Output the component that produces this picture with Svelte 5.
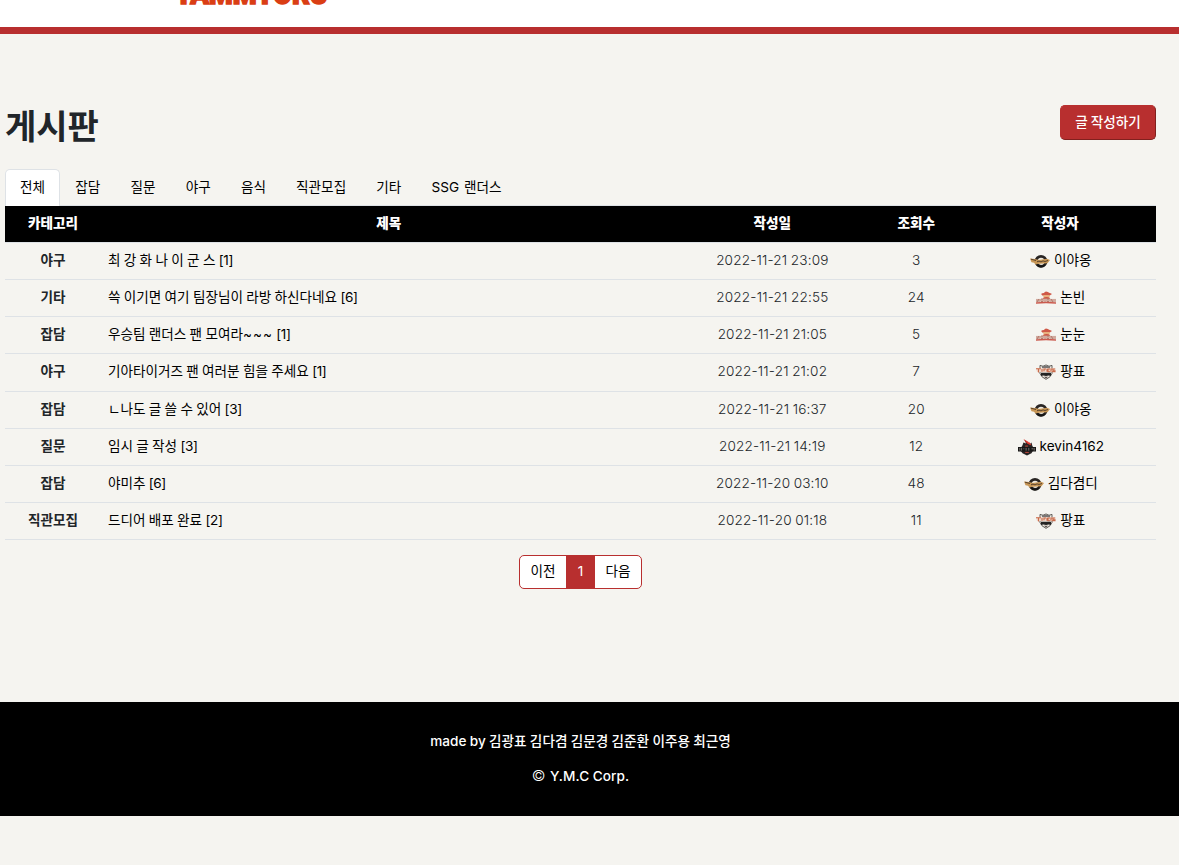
<script>
  const tabs = ['전체', '잡담', '질문', '야구', '음식', '직관모집', '기타', 'SSG 랜더스'];
  const posts = [
    ['야구', '최 강 화 나 이 군 스', '', 1, '2022-11-21 23:09', 3, 'eagles', '이야옹'],
    ['기타', '쓱 이기면 여기 팀장님이 라방 하신다네요', '', 6, '2022-11-21 22:55', 24, 'landers', '논빈'],
    ['잡담', '우승팀 랜더스 팬 모여라', '~~~', 1, '2022-11-21 21:05', 5, 'landers', '눈눈'],
    ['야구', '기아타이거즈 팬 여러분 힘을 주세요', '', 1, '2022-11-21 21:02', 7, 'tigers', '팡표'],
    ['잡담', 'ㄴ나도 글 쓸 수 있어', '', 3, '2022-11-21 16:37', 20, 'eagles', '이야옹'],
    ['질문', '임시 글 작성', '', 3, '2022-11-21 14:19', 12, 'wiz', 'kevin4162'],
    ['잡담', '야미추', '', 6, '2022-11-20 03:10', 48, 'eagles', '김다겸디'],
    ['직관모집', '드디어 배포 완료', '', 2, '2022-11-20 01:18', 11, 'tigers', '팡표']
  ];
</script>

{#snippet emblem(team)}
  <svg class="emblem" class:small={team === 'wiz'} viewBox="0 0 20 20">
    {#if team === 'eagles'}
      <circle cx="11" cy="10.3" r="5" fill="#eee8dc" stroke="#292523" stroke-width="2.8" />
      <path d="M0 7.5 5 8l4 1 8-1.2 3 1.2-2.5 3.2-9 .6-3 .8-1.5-1.8-2.5-.6Z" fill="#c79655" />
      <path d="M1 8.2 6 9.5M7 10.8l2-.7 2 .8 2-1 2 .6 3-1" fill="none" stroke="#4c3928" stroke-width=".9" />
      <path d="M7 14q4 3 8 0" fill="none" stroke="#151515" stroke-width="2" />
    {:else if team === 'landers'}
      <path d="M5 6q1-1 3-1 1-2.5 4-1 1 1 2 1l2 1-3 2H7Z" fill="#cf5948" />
      <path d="M7 7h7l-1 4H8Z" fill="#e8b07e" />
      <path d="M6.5 12q0-3 4-3t4 3Z" fill="#c95645" />
      <path d="M0 10.8h20v3H0Z" fill="#ead5cb" />
      <path d="M1 11v3l2-3v3M5 11h2v2.5H5ZM9 11v3M11 11h2v2.5h-2ZM15 14v-3l2 3v-3M19 11v3" fill="none" stroke="#a96a5c" stroke-width=".8" />
      <path d="M0 14.2q10-1 20 0v1.5q-10-.8-20 0Z" fill="#cb5a4e" />
    {:else if team === 'tigers'}
      <g transform="translate(0 1.6) scale(1 .9)">
        <path d="M4 2 7 3l3-1.5L13 3l3-1v9q-1 4-6 6.5Q5 15 4 11Z" fill="#f0e9e1" stroke="#5a5652" stroke-width="1" />
        <path d="M6 2.6h8v2.8H6Z" fill="#797675" />
        <path d="M0 5.3h20l-1 4H1Z" fill="#eed6c8" />
        <path d="M0 5.8h5M2.5 6v4M6 6v3M8 8.5V6h2M11 6v3M14 6h-2v3h2M15 9V6h2M19 6h-2v2h2v1h-3" fill="none" stroke="#c96a4a" stroke-width="1.1" />
        <path d="M5 10.3h10v3.4q-2-1-5 0-3-1-5 0Z" fill="#242424" />
        <path d="M8 14.5h4l-2 2Z" fill="#514c49" />
      </g>
    {:else}
      <path d="m5 8 1-3 3 1-2-4 6 5 2-2 1 4 2 3-3 5-5 2.5-5-2.5-3-4Z" fill="#292525" />
      <path d="m6 1 5 3 3 4-4-2ZM12 4l3 4-3-1Z" fill="#dd382e" />
      <path d="M0 10h20v5H0Z" fill="#171717" />
      <path d="M2 11v3M4 11v3M6 12h1M9 11v3M12 11v3M15 12h2M18 11v3" stroke="#8e8986" stroke-width=".9" />
      <path d="M8 9h3M8 16h4" stroke="#d14b3b" />
    {/if}
  </svg>
{/snippet}

<header>
  <svg class="brand" viewBox="0 0 156 30" role="img" aria-label="YAMMYORU">
    <text x="0" y="29" textLength="153" lengthAdjust="spacingAndGlyphs">YAMMYORU</text>
  </svg>
</header>

<main>
  <div class="heading">
    <h1>게시판</h1>
    <button class="write">글 작성하기</button>
  </div>

  <nav class="tabs">
    {#each tabs as tab, i}
      <a class:active={i === 0}>{tab}</a>
    {/each}
  </nav>

  <section class="board">
    <div class="row head">
      <span>카테고리</span><span>제목</span><span>작성일</span><span>조회수</span><span>작성자</span>
    </div>
    {#each posts as [category, title, wave, replies, date, views, team, author]}
      <div class="row">
        <b>{category}</b>
        <span class="title">{title}<span class="wave">{wave}</span> <span class="replies">[{replies}]</span></span>
        <span class="num">{date}</span>
        <span class="num">{views}</span>
        <span class="author">{@render emblem(team)}<span>{author}</span></span>
      </div>
    {/each}
  </section>

  <div class="pages">
    <div class="pager"><span>이전</span><span class="current">1</span><span>다음</span></div>
  </div>
</main>

<footer>
  <p>made by 김광표 김다겸 김문경 김준환 이주용 최근영</p>
  <p class="copy"><span class="mark">©</span> Y.M.C Corp.</p>
</footer>

<style>
  :global(body) {
    margin: 0;
    background: #f5f4f0;
    color: #212529;
    font: 13.6px/20.4px Inter, 'Noto Sans CJK KR', sans-serif;
    word-spacing: -0.5px;
  }
  header {
    height: 27px;
    background: #fff;
    border-bottom: 7px solid #b82f2f;
    overflow: hidden;
  }
  .brand {
    display: block;
    width: 156px;
    height: 30px;
    margin: -25px 0 0 175px;
  }
  .brand text {
    font: 900 30px Roboto, 'Liberation Sans', sans-serif;
    fill: #da3e14;
    stroke: #da3e14;
    stroke-width: 1.6px;
  }
  main {
    box-sizing: border-box;
    height: 668px;
    padding: 71px 23px 0 5px;
  }
  .heading {
    display: flex;
    justify-content: space-between;
    align-items: flex-start;
    height: 64px;
  }
  h1 {
    margin: 0;
    font: 700 34px/39px 'Noto Sans CJK KR', sans-serif;
  }
  .write {
    box-sizing: border-box;
    width: 96px;
    height: 35px;
    padding: 0;
    border: 1px solid #b82f2f;
    border-right-color: #81201e;
    border-bottom-color: #81201e;
    border-radius: 5px;
    background: #b82f2f;
    color: #fff;
    font: 500 13.6px/31px Inter, 'Noto Sans CJK KR', sans-serif;
    word-spacing: -0.5px;
  }
  .tabs {
    display: flex;
    box-sizing: border-box;
    height: 37px;
    border-bottom: 1px solid #dee2e6;
  }
  .tabs a {
    box-sizing: border-box;
    height: 37px;
    padding: 7px 14.1px;
    border: 1px solid transparent;
    border-bottom: 0;
    border-radius: 5px 5px 0 0;
    color: #000;
    white-space: nowrap;
  }
  .tabs a:last-child {
    word-spacing: 1px;
  }
  .tabs a.active {
    background: #fff;
    border-color: #dee2e6;
  }
  .row {
    display: grid;
    grid-template-columns: 1fr 6fr 2fr 1fr 2fr;
    box-sizing: border-box;
    height: 37.2px;
    padding-top: 7px;
    border-bottom: 1px solid #dee2e6;
    text-align: center;
    white-space: nowrap;
  }
  .row.head {
    height: 36.8px;
    background: #000;
    color: #fff;
    font-weight: 900;
  }
  .row .title {
    padding-left: 7px;
    color: #000;
    text-align: left;
  }
  .wave {
    letter-spacing: 1px;
  }
  .replies {
    letter-spacing: -0.4px;
  }
  .num {
    font-weight: 300;
    letter-spacing: 0.15px;
  }
  .author {
    display: flex;
    justify-content: center;
    gap: 4px;
    padding-left: 1.4px;
    color: #000;
  }
  .emblem {
    width: 20px;
    height: 20px;
    margin-top: 1px;
  }
  .emblem.small {
    width: 18px;
  }
  .pages {
    display: flex;
    justify-content: center;
    padding-top: 15px;
  }
  .pager {
    display: flex;
    box-sizing: border-box;
    width: 123px;
    height: 34px;
    overflow: hidden;
    border: 1px solid #b82f2f;
    border-radius: 5px;
    background: #fff;
    color: #000;
    line-height: 30px;
    text-align: center;
  }
  .pager span {
    flex: 1;
  }
  .pager .current {
    flex: 0 0 29px;
    background: #b82f2f;
    color: #fff;
  }
  footer {
    box-sizing: border-box;
    height: 114px;
    padding: 29px 18px 0 0;
    background: #000;
    color: #fff;
    font-weight: 500;
    text-align: center;
    word-spacing: -0.3px;
  }
  footer p {
    margin: 0 0 15px;
  }
  .copy {
    letter-spacing: 0.1px;
  }
  .mark {
    margin-right: 1px;
    font-size: 15px;
    font-weight: 300;
  }
</style>
